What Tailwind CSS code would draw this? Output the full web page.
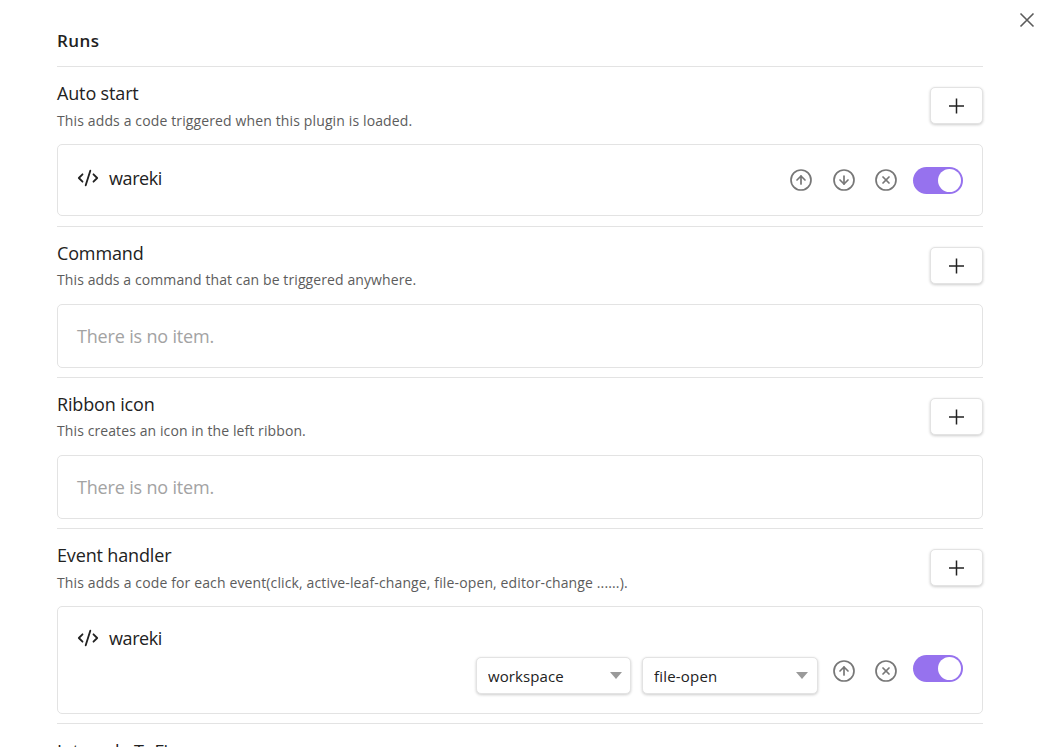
<!DOCTYPE html>
<html lang="en">
<head>
  <meta charset="UTF-8" />
  <title>Runs</title>
  <script src="https://cdn.jsdelivr.net/npm/@tailwindcss/browser@4"></script>
</head>
<body class="bg-white text-[#222222] font-['Open_Sans','Noto_Sans',sans-serif]">
  <div class="relative h-[747px] w-[1041px] overflow-hidden pl-[57px]">
    <!-- Close -->
    <button class="absolute left-[1018px] top-[11px] text-[#5c5c5c]">
      <svg width="18" height="18" viewBox="0 0 18 18" fill="none" stroke="currentColor" stroke-width="1.6"><path d="M2.5 2.5l13 13M15.5 2.5l-13 13"/></svg>
    </button>

    <div class="w-[926px]">
      <!-- Heading -->
      <div class="flex h-[67px] items-center border-b border-[#e3e3e3] pt-[15px]">
        <h2 class="text-[17px] font-semibold tracking-[0.4px]">Runs</h2>
      </div>

      <!-- Auto start -->
      <section class="border-b border-[#e3e3e3] pt-4 pb-[10px]">
        <div class="mb-4 flex h-[45px] items-center justify-between">
          <div>
            <div class="text-[18px] leading-[24px] tracking-[-0.15px]">Auto start</div>
            <div class="mt-[7px] text-[14px] leading-[18px] tracking-[0.13px] text-[#5c5c5c]">This adds a code triggered when this plugin is loaded.</div>
          </div>
          <button class="flex h-[37px] w-[53px] items-center justify-center rounded-[5px] border border-[#e3e3e3] bg-white shadow-[0_1px_3px_rgba(0,0,0,0.2)]">
            <svg width="18" height="18" viewBox="0 0 18 18" fill="none" stroke="#222222" stroke-width="1.5"><path d="M8.5 1.5v15M1 9h15"/></svg>
          </button>
        </div>
        <div class="flex h-[72px] items-center justify-between rounded-[5px] border border-[#e3e3e3] pr-[19px] pl-[19px]">
          <div class="flex items-center gap-[10px] pb-1">
            <svg width="22" height="22" viewBox="0 0 24 24" fill="none" stroke="#222222" stroke-width="2" stroke-linecap="round" stroke-linejoin="round"><path d="m18 16 4-4-4-4"/><path d="m6 8-4 4 4 4"/><path d="m14.5 4-5 16"/></svg>
            <span class="text-[18px] leading-[24px] tracking-[-0.4px]">wareki</span>
          </div>
          <div class="flex items-center">
            <svg width="24" height="24" viewBox="0 0 24 24" fill="none" stroke="#777777" stroke-width="1.7" stroke-linecap="round" stroke-linejoin="round"><circle cx="12" cy="12" r="10"/><path d="m16 12-4-4-4 4"/><path d="M12 16V8"/></svg>
            <svg class="ml-[19px]" width="24" height="24" viewBox="0 0 24 24" fill="none" stroke="#777777" stroke-width="1.7" stroke-linecap="round" stroke-linejoin="round"><circle cx="12" cy="12" r="10"/><path d="m8 12 4 4 4-4"/><path d="M12 8v8"/></svg>
            <svg class="ml-[18px]" width="24" height="24" viewBox="0 0 24 24" fill="none" stroke="#777777" stroke-width="1.7" stroke-linecap="round" stroke-linejoin="round"><circle cx="12" cy="12" r="10"/><path d="m15 9-6 6"/><path d="m9 9 6 6"/></svg>
            <div class="ml-[15px] flex h-[27px] w-[50px] items-center justify-end rounded-full bg-[#9672ee] pr-[2px]">
              <div class="h-[23px] w-[23px] rounded-full bg-white"></div>
            </div>
          </div>
        </div>
      </section>

      <!-- Command -->
      <section class="border-b border-[#e3e3e3] pt-4 pb-[9px]">
        <div class="mb-4 flex h-[45px] items-center justify-between">
          <div class="pb-[2px]">
            <div class="text-[18px] leading-[24px] tracking-[-0.15px]">Command</div>
            <div class="mt-[6px] text-[14px] leading-[18px] tracking-[0.1px] text-[#5c5c5c]">This adds a command that can be triggered anywhere.</div>
          </div>
          <button class="flex h-[37px] w-[53px] items-center justify-center rounded-[5px] border border-[#e3e3e3] bg-white shadow-[0_1px_3px_rgba(0,0,0,0.2)]">
            <svg width="18" height="18" viewBox="0 0 18 18" fill="none" stroke="#222222" stroke-width="1.5"><path d="M8.5 1.5v15M1 9h15"/></svg>
          </button>
        </div>
        <div class="flex h-[64px] items-center rounded-[5px] border border-[#e3e3e3] px-[19px] text-[18px] tracking-[-0.17px] text-[#a3a3a3]">There is no item.</div>
      </section>

      <!-- Ribbon icon -->
      <section class="border-b border-[#e3e3e3] pt-4 pb-[9px]">
        <div class="mb-4 flex h-[45px] items-center justify-between">
          <div class="pb-[2px]">
            <div class="text-[18px] leading-[24px] tracking-[-0.15px]">Ribbon icon</div>
            <div class="mt-[6px] text-[14px] leading-[18px] tracking-[0.1px] text-[#5c5c5c]">This creates an icon in the left ribbon.</div>
          </div>
          <button class="flex h-[37px] w-[53px] items-center justify-center rounded-[5px] border border-[#e3e3e3] bg-white shadow-[0_1px_3px_rgba(0,0,0,0.2)]">
            <svg width="18" height="18" viewBox="0 0 18 18" fill="none" stroke="#222222" stroke-width="1.5"><path d="M8.5 1.5v15M1 9h15"/></svg>
          </button>
        </div>
        <div class="flex h-[64px] items-center rounded-[5px] border border-[#e3e3e3] px-[19px] text-[18px] tracking-[-0.17px] text-[#a3a3a3]">There is no item.</div>
      </section>

      <!-- Event handler -->
      <section class="border-b border-[#e3e3e3] pt-4 pb-[9px]">
        <div class="mb-4 flex h-[45px] items-center justify-between">
          <div class="pb-[1px]">
            <div class="text-[18px] leading-[24px] tracking-[-0.15px]">Event handler</div>
            <div class="mt-[7px] text-[14px] leading-[18px] tracking-[0.13px] text-[#5c5c5c]">This adds a code for each event(click, active-leaf-change, file-open, editor-change ......).</div>
          </div>
          <button class="flex h-[37px] w-[53px] items-center justify-center rounded-[5px] border border-[#e3e3e3] bg-white shadow-[0_1px_3px_rgba(0,0,0,0.2)]">
            <svg width="18" height="18" viewBox="0 0 18 18" fill="none" stroke="#222222" stroke-width="1.5"><path d="M8.5 1.5v15M1 9h15"/></svg>
          </button>
        </div>
        <div class="h-[108px] rounded-[5px] border border-[#e3e3e3] px-[19px] pt-[19px]">
          <div class="flex h-[24px] items-center gap-[10px]">
            <svg width="22" height="22" viewBox="0 0 24 24" fill="none" stroke="#222222" stroke-width="2" stroke-linecap="round" stroke-linejoin="round"><path d="m18 16 4-4-4-4"/><path d="m6 8-4 4 4 4"/><path d="m14.5 4-5 16"/></svg>
            <span class="text-[18px] leading-[24px] tracking-[-0.4px]">wareki</span>
          </div>
          <div class="mt-[5px] flex items-start justify-end">
            <div class="relative mt-[2px]">
              <select class="h-[37px] w-[155px] appearance-none rounded-[5px] border border-[#e3e3e3] bg-white pt-[2px] pl-[11px] text-[15px] tracking-[0.1px] shadow-[0_1px_3px_rgba(0,0,0,0.2)]"><option>workspace</option></select>
              <div class="absolute top-[15px] right-[9px] h-0 w-0 border-x-[6px] border-t-[7px] border-x-transparent border-t-[#9a9a9a]"></div>
            </div>
            <div class="relative mt-[2px] ml-[11px]">
              <select class="h-[37px] w-[176px] appearance-none rounded-[5px] border border-[#e3e3e3] bg-white pt-[2px] pl-[11px] text-[15px] tracking-[0.2px] shadow-[0_1px_3px_rgba(0,0,0,0.2)]"><option>file-open</option></select>
              <div class="absolute top-[15px] right-[10px] h-0 w-0 border-x-[6px] border-t-[7px] border-x-transparent border-t-[#9a9a9a]"></div>
            </div>
            <svg class="mt-[4px] ml-[14px]" width="24" height="24" viewBox="0 0 24 24" fill="none" stroke="#777777" stroke-width="1.7" stroke-linecap="round" stroke-linejoin="round"><circle cx="12" cy="12" r="10"/><path d="m16 12-4-4-4 4"/><path d="M12 16V8"/></svg>
            <svg class="mt-[4px] ml-[18px]" width="24" height="24" viewBox="0 0 24 24" fill="none" stroke="#777777" stroke-width="1.7" stroke-linecap="round" stroke-linejoin="round"><circle cx="12" cy="12" r="10"/><path d="m15 9-6 6"/><path d="m9 9 6 6"/></svg>
            <div class="ml-[15px] flex h-[27px] w-[50px] items-center justify-end rounded-full bg-[#9672ee] pr-[2px]">
              <div class="h-[23px] w-[23px] rounded-full bg-white"></div>
            </div>
          </div>
        </div>
      </section>

      <!-- Interval, cut off by the window -->
      <section class="pt-[15px]">
        <div class="text-[18px] leading-[24px] tracking-[-0.15px]">Interval - ToFix</div>
      </section>
    </div>
  </div>
</body>
</html>
